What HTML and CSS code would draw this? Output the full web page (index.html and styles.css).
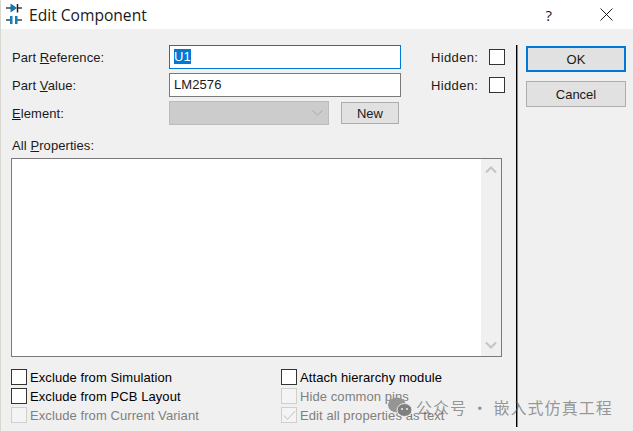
FILE: index.html
```html
<!DOCTYPE html>
<html lang="en">
<head>
    <meta charset="UTF-8">
    <title>Edit Component</title>
    <link rel="stylesheet" href="styles.css">
</head>
<body>
<div class="dialog">
    <div class="titlebar">
        <svg class="app-icon" width="16" height="20" viewBox="0 0 16 20">
            <path d="M0 4H5M11 4H16M0 16H4M11 16H16" stroke="#444" stroke-width="1.5" fill="none"/>
            <path d="M4.5 -0.5L11 4L4.5 8.5Z" fill="#0a78b4"/>
            <path d="M11.5 0V8.5" stroke="#222" stroke-width="1.5"/>
            <rect x="4" y="12" width="2.5" height="8" fill="#0f7fbe"/>
            <rect x="9" y="12" width="2.5" height="8" fill="#0f7fbe"/>
        </svg>
        <span class="title">Edit Component</span>
        <span class="help">?</span>
        <svg class="close" width="13" height="13" viewBox="0 0 13 13">
            <path d="M0.5 0.5L12.5 12.5M12.5 0.5L0.5 12.5" stroke="#222" stroke-width="1" fill="none"/>
        </svg>
    </div>

    <div class="content">
        <div class="main">
            <div class="row">
                <label class="field-label">Part <u>R</u>eference:</label>
                <div class="input focused"><span class="selected">U1</span></div>
                <span class="hidden-label">Hidden:</span>
                <span class="check"></span>
            </div>
            <div class="row">
                <label class="field-label">Part <u>V</u>alue:</label>
                <div class="input">LM2576</div>
                <span class="hidden-label">Hidden:</span>
                <span class="check"></span>
            </div>
            <div class="row">
                <label class="field-label"><u>E</u>lement:</label>
                <div class="select">
                    <svg width="11" height="6" viewBox="0 0 11 6">
                        <path d="M0.5 0.5L5.5 5L10.5 0.5" stroke="#a8a8a8" fill="none"/>
                    </svg>
                </div>
                <button class="btn new-btn">New</button>
            </div>

            <div class="all-label">All <u>P</u>roperties:</div>
            <div class="listbox">
                <div class="scrollbar">
                    <svg width="12" height="8" viewBox="0 0 12 8">
                        <path d="M1 6.5L6 1.5L11 6.5" stroke="#c4c4c4" stroke-width="2" fill="none"/>
                    </svg>
                    <svg width="12" height="8" viewBox="0 0 12 8">
                        <path d="M1 1.5L6 6.5L11 1.5" stroke="#c4c4c4" stroke-width="2" fill="none"/>
                    </svg>
                </div>
            </div>

            <div class="options">
                <div class="option"><span class="check"></span>Exclude from Simulation</div>
                <div class="option"><span class="check"></span>Attach hierarchy module</div>
                <div class="option"><span class="check"></span>Exclude from PCB Layout</div>
                <div class="option disabled"><span class="check"></span>Hide common pins</div>
                <div class="option disabled"><span class="check"></span>Exclude from Current Variant</div>
                <div class="option disabled">
                    <span class="check">
                        <svg width="13" height="11" viewBox="0 0 13 11">
                            <path d="M1 5.5L4.5 9.5L12 1" stroke="#c0c0c0" fill="none"/>
                        </svg>
                    </span>Edit all properties as text
                </div>
            </div>
        </div>

        <div class="divider"></div>

        <div class="side">
            <button class="btn default">OK</button>
            <button class="btn cancel">Cancel</button>
        </div>
    </div>

    <div class="watermark">
        <svg width="24" height="20" viewBox="0 0 24 20">
            <ellipse cx="9" cy="8" rx="9" ry="7.5" fill="#959595"/>
            <ellipse cx="16.5" cy="13" rx="7.5" ry="6.5" fill="#808080" stroke="#eee"/>
            <circle cx="14" cy="12" r="1" fill="#eee"/>
            <circle cx="19" cy="12" r="1" fill="#eee"/>
        </svg>
        <span>公众号 · 嵌入式仿真工程</span>
    </div>
</div>
</body>
</html>
```

FILE: styles.css
```css
* {
    box-sizing: border-box;
}

html, body {
    margin: 0;
    padding: 0;
    height: 100%;
    overflow: hidden;
}

body {
    background-color: #f0f0f0;
    font-family: "Liberation Sans", Arial, sans-serif;
    font-size: 13px;
    letter-spacing: 0.08px;
    color: #1a1a1a;
}

.dialog {
    position: relative;
    height: 431px;
    border-left: 1px solid #d8d8d0;
}

/* title bar */
.titlebar {
    display: flex;
    align-items: center;
    height: 29px;
    background-color: #fff;
    padding-left: 5px;
}

.app-icon {
    margin-right: 7px;
    margin-top: -1px;
    overflow: visible;
}

.title {
    font-family: "Open Sans", sans-serif;
    font-size: 15.6px;
    letter-spacing: 0;
    flex: 1;
}

.help {
    font-family: "Open Sans", sans-serif;
    font-size: 15px;
    margin-right: 48px;
}

.close {
    margin-right: 20px;
}

/* body of the dialog */
.content {
    display: flex;
    padding: 16px 7px 0 10px;
}

.main {
    width: 491px;
    flex-shrink: 0;
}

.row {
    display: flex;
    align-items: center;
    height: 24px;
    margin-bottom: 4px;
}

.row > * {
    flex-shrink: 0;
}

.field-label {
    width: 158px;
    padding-left: 1px;
}

.input {
    width: 232px;
    height: 24px;
    background-color: #fff;
    border: 1px solid #7a7a7a;
    padding: 0 4px;
    line-height: 22px;
}

.input.focused {
    border-color: #0078d7;
}

.selected {
    background-color: #0078d7;
    color: #fff;
    display: inline-block;
    line-height: 15px;
}

.hidden-label {
    margin-left: 30px;
    width: 58px;
    letter-spacing: 0.35px;
}

.check {
    display: flex;
    align-items: center;
    justify-content: center;
    width: 16px;
    height: 16px;
    flex-shrink: 0;
    background-color: #fff;
    border: 1px solid #333;
}

.select {
    display: flex;
    align-items: center;
    justify-content: flex-end;
    width: 160px;
    height: 24px;
    padding-right: 5px;
    background-color: #cccccc;
    border: 1px solid #bcbcbc;
}

.btn {
    font-family: "Liberation Sans", Arial, sans-serif;
    font-size: 13px;
    color: #1a1a1a;
    background-color: #e1e1e1;
    border: 1px solid #adadad;
    padding: 0;
}

.new-btn {
    width: 58px;
    height: 22px;
    margin-left: 12px;
}

.all-label {
    margin-top: 12px;
    height: 17px;
    line-height: 17px;
    padding-left: 1px;
}

.listbox {
    display: flex;
    justify-content: flex-end;
    height: 199px;
    margin-top: 4px;
    background-color: #fff;
    border: 1px solid #7a7a7a;
}

.scrollbar {
    display: flex;
    flex-direction: column;
    justify-content: space-between;
    align-items: center;
    width: 20px;
    height: 100%;
    padding: 7px 0;
    background-color: #f0f0f0;
}

.options {
    display: grid;
    grid-template-columns: 270px 1fr;
    row-gap: 3px;
    margin-top: 12px;
}

.option {
    display: flex;
    align-items: center;
    gap: 3px;
    height: 16px;
    color: #000;
    white-space: nowrap;
}

.option.disabled {
    color: #7f7f7f;
}

.option.disabled .check {
    border-color: #cfcfcf;
    background-color: #f4f4f4;
}

.divider {
    width: 2px;
    height: 382px;
    margin: 0 8px 0 14px;
    background-color: #000;
    border-right: 1px solid #8a8a8a;
    flex-shrink: 0;
}

.side {
    display: flex;
    flex-direction: column;
    width: 100px;
    padding-top: 1px;
}

.side .btn {
    width: 100px;
    height: 26px;
}

.side .btn.default {
    border: 2px solid #0078d7;
}

.side .btn.cancel {
    margin-top: 9px;
}

/* watermark sits over the dialog */
.watermark {
    position: absolute;
    left: 387px;
    top: 395px;
    display: flex;
    align-items: center;
    gap: 4px;
    font-family: "Noto Sans CJK SC", sans-serif;
    font-size: 16px;
    letter-spacing: 1.05px;
    color: rgba(90, 90, 90, 0.62);
}
```
